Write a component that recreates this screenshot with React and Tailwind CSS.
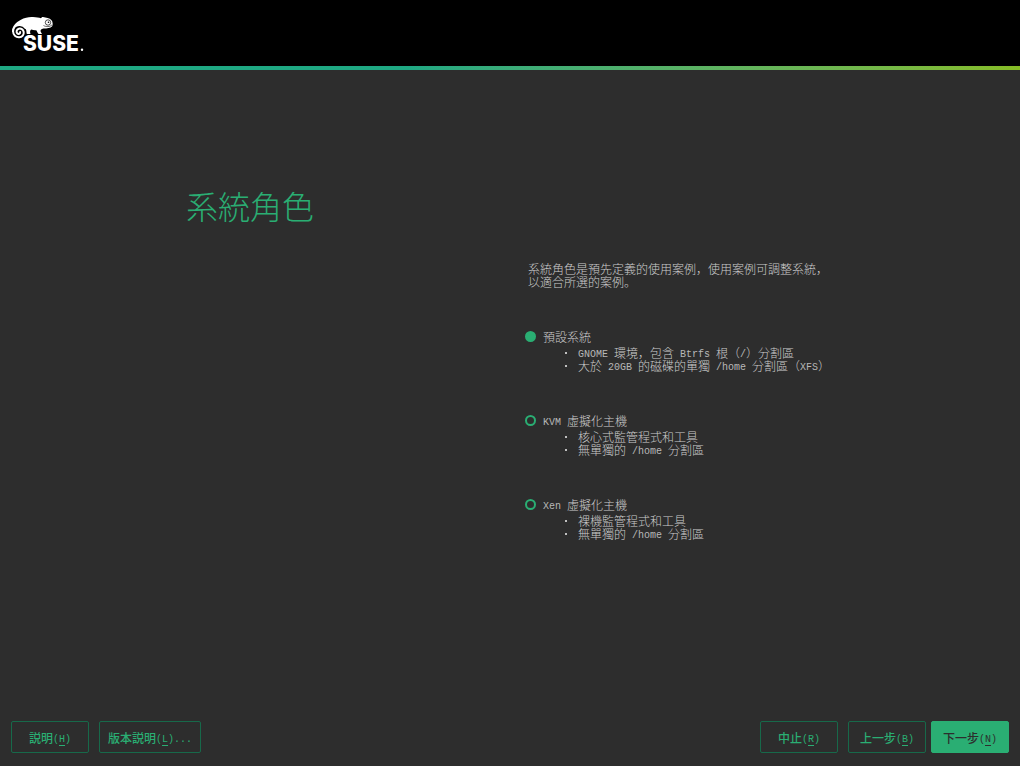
import { useState } from "react";

const roles = [
  {
    id: "default",
    label: "預設系統",
    details: ["GNOME 環境，包含 Btrfs 根（/）分割區", "大於 20GB 的磁碟的單獨 /home 分割區（XFS）"],
  },
  {
    id: "kvm",
    label: "KVM 虛擬化主機",
    details: ["核心式監管程式和工具", "無單獨的 /home 分割區"],
  },
  {
    id: "xen",
    label: "Xen 虛擬化主機",
    details: ["裸機監管程式和工具", "無單獨的 /home 分割區"],
  },
];

// Latin runs are set at half the width of a Chinese character.
function Mixed({ children }) {
  return children.split(/([\x20-\x7e]+)/).map((part, i) =>
    i % 2 ? (
      <span
        key={i}
        className="align-[1px] font-['Liberation_Mono',monospace] text-[10px] leading-0 whitespace-pre text-[#b8b8b8]"
      >
        {part}
      </span>
    ) : (
      part
    )
  );
}

function Logo() {
  return (
    <svg width="72" height="36" viewBox="0 0 72 36" role="img" aria-label="SUSE" className="block overflow-visible">
      <path
        fill="#fff"
        d="M0 16C0 10 4 6.500 8.500 4C13 1.300 17 .8 21 1C24.500 1.100 27 1.700 29 2.300C29.500 1.500 30 .9 31 1C34 1.700 37.500 2 39.500 4.200C40.800 5.800 41 8.500 40.200 10.300C38.500 12.300 35 12.400 31.500 12.600C28.800 13 28.300 14.200 28.700 15.800L30 18H26.600C25.500 17 25.200 15.700 24.300 14.200C22.500 14.500 21 14 19.200 13.400C18 14.500 17.800 15.500 18.500 18H14.800C14.200 16.300 14.700 14.800 13.700 13C13.300 10.700 10.500 8.800 7.500 8.700C4 8.700 1.500 12 1.700 16Z"
      />
      <path
        fill="none"
        stroke="#fff"
        strokeWidth="2"
        strokeLinecap="round"
        d="M13.500 12C12 9.500 9.500 8.800 7 9C3.500 9.300 1.100 12.200 1.100 15.500C1.200 19 3.800 21.400 7.200 21.200C10.300 21 12.100 18.700 11.700 16C11.300 13.500 9 12.100 6.800 12.700C4.500 13.400 4 15.800 5.200 17.300C6.400 18.500 8.300 17.800 8.200 16"
      />
      <circle cx="36" cy="6.500" r="2.700" fill="#fff" stroke="#000" strokeWidth=".7" />
      <circle cx="36.500" cy="6.300" r=".8" fill="#000" />
      <path d="M31.500 9.500C34 11 38 11.100 40 8.800" fill="none" stroke="#000" strokeWidth=".6" />
      <text x="11" y="35" fill="#fff" fontFamily="Inter, sans-serif" fontSize="21" fontWeight="800">
        SUSE
      </text>
      <circle cx="70" cy="33.700" r="1.200" fill="#fff" />
    </svg>
  );
}

function WizardButton({ text, hotkey, suffix = "", primary = false }) {
  return (
    <button
      type="button"
      className={
        "h-8 min-w-[78px] rounded-xs border px-2 font-medium whitespace-nowrap " +
        (primary
          ? "border-[#2aae73] bg-[#2aae73] text-[#2d2d2d]"
          : "border-[#17694a] text-[#2aae73]")
      }
    >
      {text}
      <span className="align-[1px] font-['Liberation_Mono',monospace] text-[10px] leading-0">
        (<span className="underline underline-offset-3">{hotkey}</span>){suffix}
      </span>
    </button>
  );
}

export default function App() {
  const [selected, setSelected] = useState("default");

  return (
    <div
      className="flex min-h-screen flex-col bg-[#2d2d2d] font-['Noto_Sans_CJK_JP','Noto_Sans_CJK_TC',sans-serif] text-xs/[13px] text-[#cccccc]"
      lang="ja"
    >
      <header className="bg-black">
        <div className="px-3 pt-4 pb-3.5">
          <Logo />
        </div>
        <div className="h-1 bg-linear-to-r from-[#1fa883] from-40% to-[#86bc25]" />
      </header>

      <main className="grid flex-1 grid-cols-[525fr_495fr] content-start pt-[115px]">
        <h1 className="col-span-2 pl-[186px] text-[32px]/10 font-light text-[#2aae73]">系統角色</h1>
        <form className="col-start-2 pt-[37px]">
          <p className="pl-[3px] font-light">
            系統角色是預先定義的使用案例，使用案例可調整系統，
            <br />
            以適合所選的案例。
          </p>
          <div role="radiogroup" aria-label="系統角色" className="mt-[42px] flex flex-col gap-[42px]">
            {roles.map((role) => (
              <div key={role.id} className="font-light">
                <div className="flex items-center gap-[7px]">
                  <input
                    type="radio"
                    id={role.id}
                    name="role"
                    checked={selected === role.id}
                    onChange={() => setSelected(role.id)}
                    className="size-[11px] appearance-none rounded-full border-2 border-[#2aae73] checked:bg-[#2aae73]"
                  />
                  <label htmlFor={role.id}>
                    <Mixed>{role.label}</Mixed>
                  </label>
                </div>
                <ul className="mt-[3px] pl-[53px]">
                  {role.details.map((detail) => (
                    <li
                      key={detail}
                      className="relative whitespace-nowrap before:absolute before:top-1.5 before:-left-[13px] before:size-0.5 before:bg-[#c0c0c0]"
                    >
                      <Mixed>{detail}</Mixed>
                    </li>
                  ))}
                </ul>
              </div>
            ))}
          </div>
        </form>
      </main>

      <footer className="flex items-center justify-between px-[11px] pb-[13px]">
        <div className="flex gap-2.5">
          <WizardButton text="説明" hotkey="H" />
          <WizardButton text="版本説明" hotkey="L" suffix="..." />
        </div>
        <div className="flex gap-[5px]">
          <div className="flex gap-2.5">
            <WizardButton text="中止" hotkey="R" />
            <WizardButton text="上一步" hotkey="B" />
          </div>
          <WizardButton text="下一步" hotkey="N" primary />
        </div>
      </footer>
    </div>
  );
}
